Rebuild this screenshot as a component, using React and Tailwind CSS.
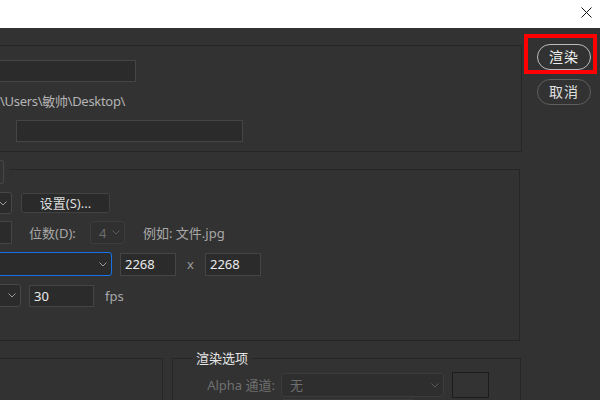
const font = { fontFamily: '"Noto Sans", "Noto Sans CJK SC", sans-serif' };

function Chevron({ dim }) {
  return (
    <svg width="8" height="5" viewBox="0 0 8 5" className="shrink-0">
      <path
        d="M0.5 0.5 4 4 7.5 0.5"
        fill="none"
        stroke={dim ? "#5a5a5a" : "#9a9a9a"}
        strokeWidth="1"
      />
    </svg>
  );
}

function Select({ className, children, dim }) {
  return (
    <div
      className={`flex items-center justify-between rounded-[3px] border bg-[#2b2b2b] pl-[8px] pr-[4px] ${className}`}
    >
      <span className="truncate">{children}</span>
      <Chevron dim={dim} />
    </div>
  );
}

function Field({ className, children }) {
  return (
    <div
      className={`flex items-center border border-[#454545] bg-[#2b2b2b] pl-[4px] text-[13px] text-[#ececec] ${className}`}
    >
      {children}
    </div>
  );
}

export default function App() {
  return (
    <div
      className="flex h-[400px] w-[600px] flex-col overflow-hidden text-[13px] leading-[18px]"
      style={font}
    >
      {/* title bar */}
      <div className="flex h-[28px] shrink-0 items-start justify-end bg-white pr-[8px] pt-[7px]">
        <svg width="11" height="11" viewBox="0 0 11 11">
          <path d="M0.5 0.5 10.5 10.5M10.5 0.5 0.5 10.5" stroke="#111" strokeWidth="1" />
        </svg>
      </div>

      <div className="relative flex flex-1 overflow-hidden bg-[#323232]">
        {/* left column */}
        <div className="flex w-[522px] shrink-0 flex-col pt-[17px]">
          {/* box 1 */}
          <div className="h-[107px] shrink-0 border-y border-r border-[#262626]">
            <Field className="-ml-[4px] mt-[14px] h-[22px] w-[140px]" />
            <div className="mt-[10px] h-[18px] tracking-[-0.3px] text-[#b4b4b4]">
              \Users\敏帅\Desktop\
            </div>
            <Field className="ml-[16px] mt-[10px] h-[22px] w-[227px]" />
          </div>

          {/* box 2 */}
          <div className="mt-[17px] h-[172px] w-[520px] shrink-0 border-y border-r border-[#262626]">
            <div className="-mt-[10px] flex h-[24px] w-[9px] bg-[#323232]">
              <div className="h-full w-[4px] rounded-r-[3px] border-y border-r border-[#474747]" />
            </div>

            <div className="mt-[8px] flex h-[22px] items-center">
              <Select className="-ml-[50px] h-[22px] w-[62px] border-[#474747]" />
              <div className="ml-[9px] flex h-[20px] w-[89px] items-center justify-center rounded-[3px] border border-[#424242] bg-[#2a2a2a] text-[#dedede]">
                设置(S)...
              </div>
            </div>

            <div className="mt-[7px] flex h-[23px] items-center">
              <Field className="-ml-[50px] h-[23px] w-[62px]" />
              <div className="ml-[17px] w-[61px] text-[#a8a8a8]">位数(D):</div>
              <Select
                dim
                className="h-[23px] w-[35px] border-[#3c3c3c] bg-[#303030] pl-[6px] text-[#6e6e6e]"
              >
                4
              </Select>
              <div className="ml-[18px] text-[#a8a8a8]">例如: 文件.jpg</div>
            </div>

            <div className="mt-[8px] flex h-[24px] items-center">
              <Select className="-ml-[50px] h-[24px] w-[162px] border-[#1473e6]" />
              <Field className="ml-[8px] h-[23px] w-[56px]">2268</Field>
              <div className="w-[29px] text-center text-[#9a9a9a]">x</div>
              <Field className="h-[23px] w-[56px]">2268</Field>
            </div>

            <div className="mt-[8px] flex h-[23px] items-center">
              <Select className="-ml-[50px] h-[23px] w-[71px] border-[#474747]" />
              <Field className="ml-[8px] h-[22px] w-[65px]">30</Field>
              <div className="ml-[11px] text-[#a8a8a8]">fps</div>
            </div>
          </div>

          {/* bottom boxes */}
          <div className="mt-[17px] flex shrink-0">
            <div className="h-[60px] w-[163px] border-t border-r border-[#262626]" />
            <div className="ml-[9px] h-[60px] w-[349px] border-x border-t border-[#262626]">
              <div className="-mt-[9px] ml-[19px] w-fit bg-[#323232] px-[4px] leading-[16px] text-[#e6e6e6]">
                渲染选项
              </div>
              <div className="mt-[6px] flex h-[26px] items-center">
                <div className="w-[102px] text-right text-[#6f6f6f]">Alpha 通道:</div>
                <Select
                  dim
                  className="ml-[6px] h-[24px] w-[163px] border-[#3c3c3c] bg-[#2e2e2e] pl-[6px] text-[#6f6f6f]"
                >
                  无
                </Select>
                <div className="ml-[8px] h-[26px] w-[37px] border border-[#1c1c1c] bg-[#333333]" />
              </div>
              <div className="ml-[108px] mt-[1px] h-[20px] w-[135px] rounded-[3px] border border-[#3c3c3c] bg-[#2e2e2e]" />
            </div>
          </div>
        </div>

        {/* right column */}
        <div className="flex flex-1 flex-col pl-[15px] pt-[16px]">
          <div className="flex h-[26px] w-[54px] items-center justify-center rounded-full border-[1.5px] border-[#bdbdbd] text-[14px] tracking-[1px] text-[#eeeeee]">
            渲染
          </div>
          <div className="mt-[9px] flex h-[26px] w-[54px] items-center justify-center rounded-full border-[1.5px] border-[#5e5e5e] text-[14px] tracking-[1px] text-[#e0e0e0]">
            取消
          </div>
        </div>

        {/* red annotation */}
        <div className="pointer-events-none absolute left-[524px] top-[6px] h-[40px] w-[73px] border-4 border-[#ff0000]" />
      </div>
    </div>
  );
}
